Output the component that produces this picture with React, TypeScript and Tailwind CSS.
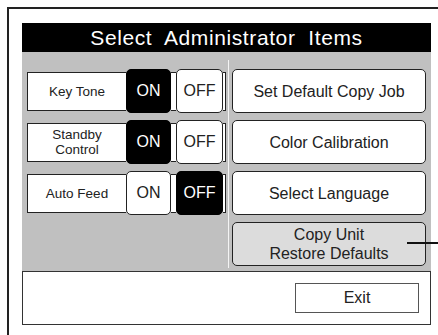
import React from "react";

const font = { fontFamily: '"Liberation Sans", Arial, Helvetica, sans-serif' };

function ToggleRow({ label, on }: { label: React.ReactNode; on: boolean }) {
  const active = "bg-black text-white border-black";
  const inactive = "bg-white text-[#222] border-[#222]";
  return (
    <div className="flex items-center h-[44px]">
      <div className="w-[99px] h-[39px] bg-white border border-r-0 border-[#222] flex items-center justify-center text-center text-[13.5px] leading-[15px] text-[#222]">
        {label}
      </div>
      <div
        className={`w-[45px] h-[44px] rounded-[5px] border flex items-center justify-center text-[16px] ${on ? active : inactive}`}
      >
        ON
      </div>
      <div className="w-[5px] h-[39px] bg-white border-y border-[#222]" />
      <div
        className={`w-[47px] h-[44px] rounded-[5px] border flex items-center justify-center text-[16px] ${!on ? active : inactive}`}
      >
        OFF
      </div>
      <div className="w-[3px] h-[39px] bg-white border-y border-r border-[#222]" />
    </div>
  );
}

function MenuButton({ children, gray }: { children: React.ReactNode; gray?: boolean }) {
  return (
    <div
      className={`w-[194px] h-[44px] rounded-[5px] border border-[#222] flex items-center justify-center text-center text-[16px] leading-[19px] text-[#222] ${gray ? "bg-[#dcdcdc]" : "bg-white"}`}
    >
      {children}
    </div>
  );
}

export default function App() {
  return (
    <div className="w-[438px] h-[335px] bg-white overflow-hidden relative" style={font}>
      <div className="ml-[7px] mt-[7px] border-l-2 border-t-2 border-[#222] pl-[13px] pt-[14px] h-[328px]">
        <div className="w-[409px]">
          <div className="h-[29px] bg-black text-white text-[21px] flex items-center justify-center whitespace-pre tracking-[0.6px]">
            {"Select  Administrator  Items"}
          </div>
          <div className="h-[219px] bg-[#c0c0c0] flex items-start px-[5px] pt-[17px] relative">
            <div className="w-[199px] flex flex-col gap-[7px]">
              <ToggleRow label="Key Tone" on={true} />
              <ToggleRow
                label={
                  <span>
                    Standby
                    <br />
                    Control
                  </span>
                }
                on={true}
              />
              <ToggleRow label="Auto Feed" on={false} />
            </div>
            <div className="ml-[2px] w-[1px] h-[208px] -mt-[9px] bg-[#f4f4f4]" />
            <div className="ml-[3px] w-[194px] flex flex-col gap-[7px]">
              <MenuButton>Set Default Copy Job</MenuButton>
              <MenuButton>Color Calibration</MenuButton>
              <MenuButton>Select Language</MenuButton>
              <MenuButton gray>
                <span>
                  Copy Unit
                  <br />
                  Restore Defaults
                </span>
              </MenuButton>
            </div>
          </div>
          <div className="h-[54px] bg-white border border-[#333] flex items-center justify-end pr-[11px]">
            <div className="w-[124px] h-[30px] border-[1.5px] border-[#555] flex items-center justify-center text-[16px] text-[#222]">
              Exit
            </div>
          </div>
        </div>
      </div>
      <div className="absolute left-[407px] top-[242px] w-[31px] h-[2px] bg-[#111]" />
    </div>
  );
}
